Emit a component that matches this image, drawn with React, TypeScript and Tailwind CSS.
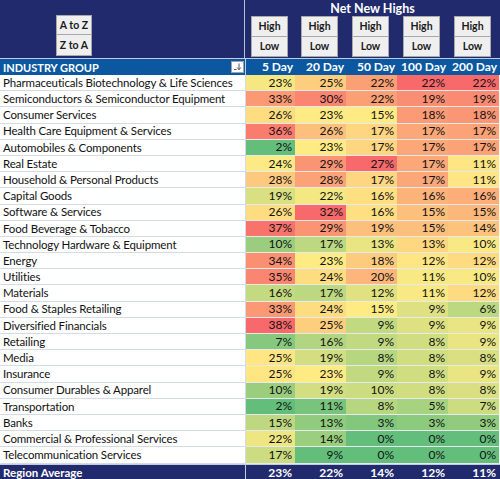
import React from "react";

type Row = { name: string; v: number[] };

const rows: Row[] = [
  { name: "Pharmaceuticals Biotechnology & Life Sciences", v: [23, 25, 22, 22, 22] },
  { name: "Semiconductors & Semiconductor Equipment", v: [33, 30, 22, 19, 19] },
  { name: "Consumer Services", v: [26, 23, 15, 18, 18] },
  { name: "Health Care Equipment & Services", v: [36, 26, 17, 17, 17] },
  { name: "Automobiles & Components", v: [2, 23, 17, 17, 17] },
  { name: "Real Estate", v: [24, 29, 27, 17, 11] },
  { name: "Household & Personal Products", v: [28, 28, 17, 17, 11] },
  { name: "Capital Goods", v: [19, 22, 16, 16, 16] },
  { name: "Software & Services", v: [26, 32, 16, 15, 15] },
  { name: "Food Beverage & Tobacco", v: [37, 29, 19, 15, 14] },
  { name: "Technology Hardware & Equipment", v: [10, 17, 13, 13, 10] },
  { name: "Energy", v: [34, 23, 18, 12, 12] },
  { name: "Utilities", v: [35, 24, 20, 11, 10] },
  { name: "Materials", v: [16, 17, 12, 11, 12] },
  { name: "Food & Staples Retailing", v: [33, 24, 15, 9, 6] },
  { name: "Diversified Financials", v: [38, 25, 9, 9, 9] },
  { name: "Retailing", v: [7, 16, 9, 8, 9] },
  { name: "Media", v: [25, 19, 8, 8, 8] },
  { name: "Insurance", v: [25, 23, 9, 8, 9] },
  { name: "Consumer Durables & Apparel", v: [10, 19, 10, 8, 8] },
  { name: "Transportation", v: [2, 11, 8, 5, 7] },
  { name: "Banks", v: [15, 13, 3, 3, 3] },
  { name: "Commercial & Professional Services", v: [22, 14, 0, 0, 0] },
  { name: "Telecommunication Services", v: [17, 9, 0, 0, 0] },
];

const avg = [23, 22, 14, 12, 11];
const days = ["5 Day", "20 Day", "50 Day", "100 Day", "200 Day"];

const G = [99, 190, 123];
const Y = [255, 235, 132];
const R = [248, 105, 107];

const stats = [0, 1, 2, 3, 4].map((c) => {
  const s = rows.map((r) => r.v[c]).sort((a, b) => a - b);
  const rank = 0.5 * (s.length - 1);
  const lo = Math.floor(rank);
  const mid = s[lo] + (s[lo + 1] - s[lo]) * (rank - lo);
  return { min: s[0], max: s[s.length - 1], mid };
});

function mix(a: number[], b: number[], t: number) {
  return `rgb(${a.map((x, i) => Math.round(x + (b[i] - x) * t)).join(",")})`;
}

function colorFor(c: number, val: number) {
  const { min, max, mid } = stats[c];
  if (val <= mid) {
    const t = mid === min ? 1 : (val - min) / (mid - min);
    return mix(G, Y, t);
  }
  const t = max === mid ? 1 : (val - mid) / (max - mid);
  return mix(Y, R, t);
}

const font = "font-['Lato','Open_Sans',sans-serif]";
const cols = "grid grid-cols-[246px_49px_51px_51px_51px_51px]";

function Btn({ children, cls }: { children: React.ReactNode; cls: string }) {
  return (
    <div
      className={`flex items-center justify-center bg-[#efefef] border border-[#a9a9a9] text-[10.5px] font-bold text-[#1a1a1a] leading-none ${cls}`}
    >
      {children}
    </div>
  );
}

export default function App() {
  return (
    <div className={`w-[500px] h-[479px] overflow-hidden bg-white ${font}`}>
      {/* top header */}
      <div className="flex h-[58px] bg-[#202a6c]">
        <div className="w-[245px] border-r border-[#b9bfd6] pl-[56px] pt-[15px]">
          <Btn cls="w-[36px] h-[20px]">A to Z</Btn>
          <Btn cls="w-[36px] h-[22px] -mt-px">Z to A</Btn>
        </div>
        <div className="flex-1 flex flex-col">
          <div className="h-[16px] flex items-center justify-center text-white font-bold text-[12.5px] leading-none pt-[3px]">
            Net New Highs
          </div>
          <div className="grid grid-cols-[49px_51px_51px_51px_51px]">
            {days.map((d) => (
              <div key={d} className="flex flex-col items-center">
                <Btn cls="w-[37px] h-[21px]">High</Btn>
                <Btn cls="w-[37px] h-[21px] -mt-px">Low</Btn>
              </div>
            ))}
          </div>
        </div>
      </div>

      {/* column header */}
      <div className={`${cols} h-[17px] bg-[#0b58a0] border-t border-[#c3cbe0] text-white font-bold text-[12px] leading-none`}>
        <div className="relative flex items-center pl-[3px] border-r border-[#c3cbe0] text-[11px]">
          INDUSTRY GROUP
          <div className="absolute right-[1px] top-[2px] w-[13px] h-[12px] bg-white border border-[#9aa3b5] flex items-center justify-center">
            <svg width="9" height="8" viewBox="0 0 9 8">
              <path d="M1 6.5h2.5" stroke="#555" strokeWidth="1" />
              <path d="M6 0.5v6M4.2 4.5L6 6.8 7.8 4.5" stroke="#555" strokeWidth="1" fill="none" />
            </svg>
          </div>
        </div>
        {days.map((d) => (
          <div key={d} className="flex items-center justify-end pr-[2px]">
            {d}
          </div>
        ))}
      </div>

      {/* rows */}
      {rows.map((r) => (
        <div key={r.name} className={`${cols} h-[16.2px] text-[12px] leading-none text-[#111]`}>
          <div className="flex items-center pl-[3px] border-r border-b border-[#d3dbe9] whitespace-nowrap overflow-hidden text-[11.5px] tracking-[-0.15px]">
            {r.name}
          </div>
          {r.v.map((val, c) => (
            <div
              key={c}
              className="flex items-center justify-end pr-[3px] border-b border-[#e6e9ee]"
              style={{ backgroundColor: colorFor(c, val) }}
            >
              {val}%
            </div>
          ))}
        </div>
      ))}

      {/* average */}
      <div className={`${cols} h-[17px] bg-[#202a6c] border-t border-[#c3cbe0] text-white font-bold text-[12px] leading-none`}>
        <div className="flex items-center pl-[3px] border-r border-[#c3cbe0] text-[11.5px]">Region Average</div>
        {avg.map((a, i) => (
          <div key={i} className="flex items-center justify-end pr-[3px]">
            {a}%
          </div>
        ))}
      </div>
    </div>
  );
}
